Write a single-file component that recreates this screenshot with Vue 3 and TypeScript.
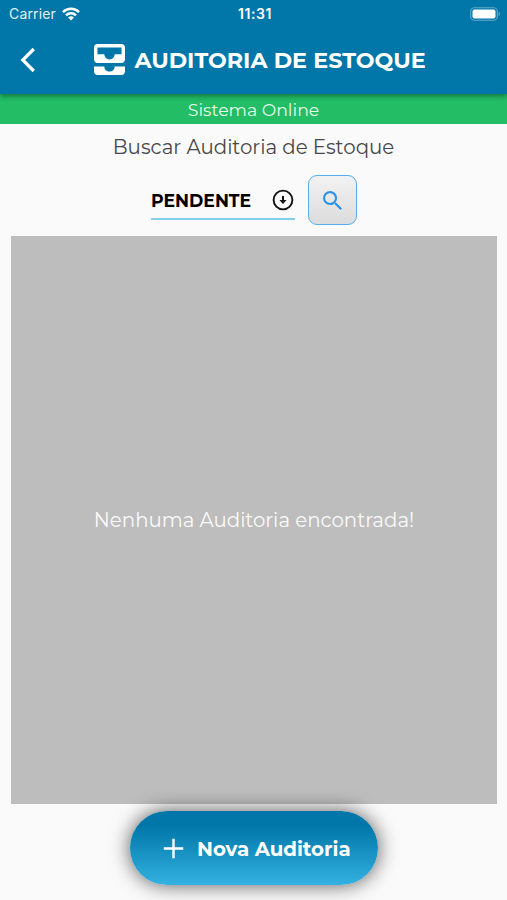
<script setup lang="ts">
import { ref } from 'vue'

const status = ref<string>('PENDENTE')
const audits = ref<string[]>([])
</script>

<template>
  <main class="screen">
    <header class="header">
      <div class="status-bar">
        <div class="carrier">
          <span>Carrier</span>
          <svg class="wifi" viewBox="0 0 18 14" fill="none" stroke="#fff" stroke-width="2.5">
            <path d="M1 5.1a11.4 11.4 0 0 1 16 0M4 8.3a7.1 7.1 0 0 1 10 0" />
            <path d="M9 13.6 6 10.6a4.3 4.3 0 0 1 6 0z" fill="#fff" stroke="none" />
          </svg>
        </div>
        <span class="clock">11:31</span>
        <svg class="battery" viewBox="0 0 31 14">
          <rect x=".7" y=".7" width="26.6" height="12.6" rx="3.8" fill="none" stroke="#66a9c9" stroke-width="1.1" />
          <rect x="2.5" y="2.5" width="23" height="9" rx="2" fill="#fff" />
          <path d="M28.7 4.7a2.8 2.8 0 0 1 0 4.6z" fill="#66a9c9" />
        </svg>
      </div>
      <div class="nav">
        <button class="back" aria-label="Voltar">
          <svg viewBox="0 0 16 26" fill="none" stroke="#fff" stroke-width="3.2"><path d="M13.8 2 2.8 13l11 11" /></svg>
        </button>
        <svg class="inbox" viewBox="3 3 18 18" fill="#fff">
          <path d="M19 3H5c-1.1 0-2 .9-2 2v7c0 1.1.9 2 2 2h14c1.1 0 2-.9 2-2V5c0-1.1-.9-2-2-2zm0 6h-4c0 1.62-1.38 3-3 3s-3-1.38-3-3H5V5h14v4zm-4 7h6v3c0 1.1-.9 2-2 2H5c-1.1 0-2-.9-2-2v-3h6c0 1.66 1.34 3 3 3s3-1.34 3-3z" />
        </svg>
        <h1>AUDITORIA DE ESTOQUE</h1>
      </div>
    </header>
    <div class="online"><span>Sistema Online</span></div>
    <h2>Buscar Auditoria de Estoque</h2>
    <div class="filters">
      <div class="select">
        <span>{{ status }}</span>
        <svg viewBox="0 0 22 22" fill="none" stroke="#111">
          <circle cx="11" cy="11" r="9.4" stroke-width="1.9" />
          <path d="M11 7v5" stroke-width="2" />
          <path d="M7.4 11h7.2L11 14.9z" fill="#111" stroke="none" />
        </svg>
      </div>
      <button class="search" aria-label="Buscar">
        <svg viewBox="3 3 17.49 17.49" fill="#2c93e6">
          <path d="M15.5 14h-.79l-.28-.27A6.47 6.47 0 0 0 16 9.5 6.5 6.5 0 1 0 9.5 16c1.61 0 3.09-.59 4.23-1.57l.27.28v.79l5 4.99L20.49 19l-4.99-5zm-6 0C7.01 14 5 11.99 5 9.5S7.01 5 9.5 5 14 7.01 14 9.5 11.99 14 9.5 14z" />
        </svg>
      </button>
    </div>
    <section class="results">
      <p v-if="audits.length === 0">Nenhuma Auditoria encontrada!</p>
    </section>
    <button class="create">
      <svg viewBox="0 0 22 22" stroke="#fff" stroke-width="2.5"><path d="M11 .8v20.4M.8 11h20.4" /></svg>
      <span>Nova Auditoria</span>
    </button>
  </main>
</template>

<style>
body { margin: 0; background: #fafafa; }
</style>

<style scoped>
* { box-sizing: border-box; }
.screen {
  height: 900px;
  display: flex;
  flex-direction: column;
  overflow: hidden;
  background: #fafafa;
  font-family: Montserrat, Inter, sans-serif;
}
button { margin: 0; padding: 0; border: 0; font: inherit; }
svg { display: block; flex: none; }
h1, h2, p { margin: 0; font-weight: 400; white-space: nowrap; }
.header {
  flex: none;
  height: 94px;
  background: #0077a8;
  color: #fff;
  box-shadow: 0 2px 5px rgba(0, 0, 0, .4);
  z-index: 1;
}
.status-bar {
  height: 27px;
  display: grid;
  grid-template-columns: 1fr auto 1fr;
  align-items: center;
  padding: 0 6px 0 9px;
  font-family: Inter, sans-serif;
  font-size: 14px;
}
.carrier { display: flex; align-items: center; gap: 6px; color: #e3f1f7; letter-spacing: .15px; }
.wifi { width: 18px; height: 14px; }
.clock { font-weight: 600; letter-spacing: .6px; }
.battery { width: 31px; height: 14px; justify-self: end; }
.nav { height: 65px; display: flex; align-items: center; padding-left: 20px; }
.back { width: 16px; height: 26px; background: none; }
.back svg { width: 16px; height: 26px; }
.inbox { width: 31px; height: 31px; margin-left: 57.5px; }
h1 { margin-left: 10px; font-size: 22.25px; font-weight: 700; line-height: 30px; }
.online {
  flex: none;
  height: 30px;
  background: #22bd65;
  color: #e4fbe9;
  text-align: center;
  font-size: 17.3px;
  line-height: 32px;
}
h2 { height: 46px; text-align: center; color: #484848; font-size: 19.8px; line-height: 46px; }
.filters { height: 66px; display: flex; gap: 13px; margin-left: 151px; padding-top: 5px; }
.select {
  width: 144px;
  height: 45px;
  display: flex;
  align-items: center;
  justify-content: space-between;
  padding-top: 7px;
  border-bottom: 2px solid #83cfec;
  color: #000;
  font-size: 17.3px;
  font-weight: 700;
}
.select svg { width: 22px; height: 22px; margin-right: 1px; }
.search {
  width: 49px;
  height: 50px;
  display: grid;
  place-items: center;
  border: 1.5px solid #55aef0;
  border-radius: 9px;
  background: linear-gradient(#f2f2f2, #dcdcdc);
}
.search svg { width: 19px; height: 19px; margin-right: 1px; }
.results {
  flex: none;
  height: 568px;
  margin: 0 10px 0 11px;
  display: grid;
  place-items: center;
  background: #bdbdbd;
  color: #fafafa;
  font-size: 19.75px;
}
.create {
  flex: none;
  width: 248px;
  height: 74px;
  margin: 7px 0 0 130px;
  display: flex;
  align-items: center;
  gap: 13px;
  padding-left: 33px;
  border-radius: 37px;
  background: linear-gradient(#0077a8 20%, #33b1e1);
  box-shadow: 0 0 20px rgba(0, 0, 0, .65);
  color: #fff;
  font-size: 19.75px;
  font-weight: 700;
  white-space: nowrap;
}
.create svg { width: 21px; height: 21px; }
.create span { padding-top: 1px; }
</style>
